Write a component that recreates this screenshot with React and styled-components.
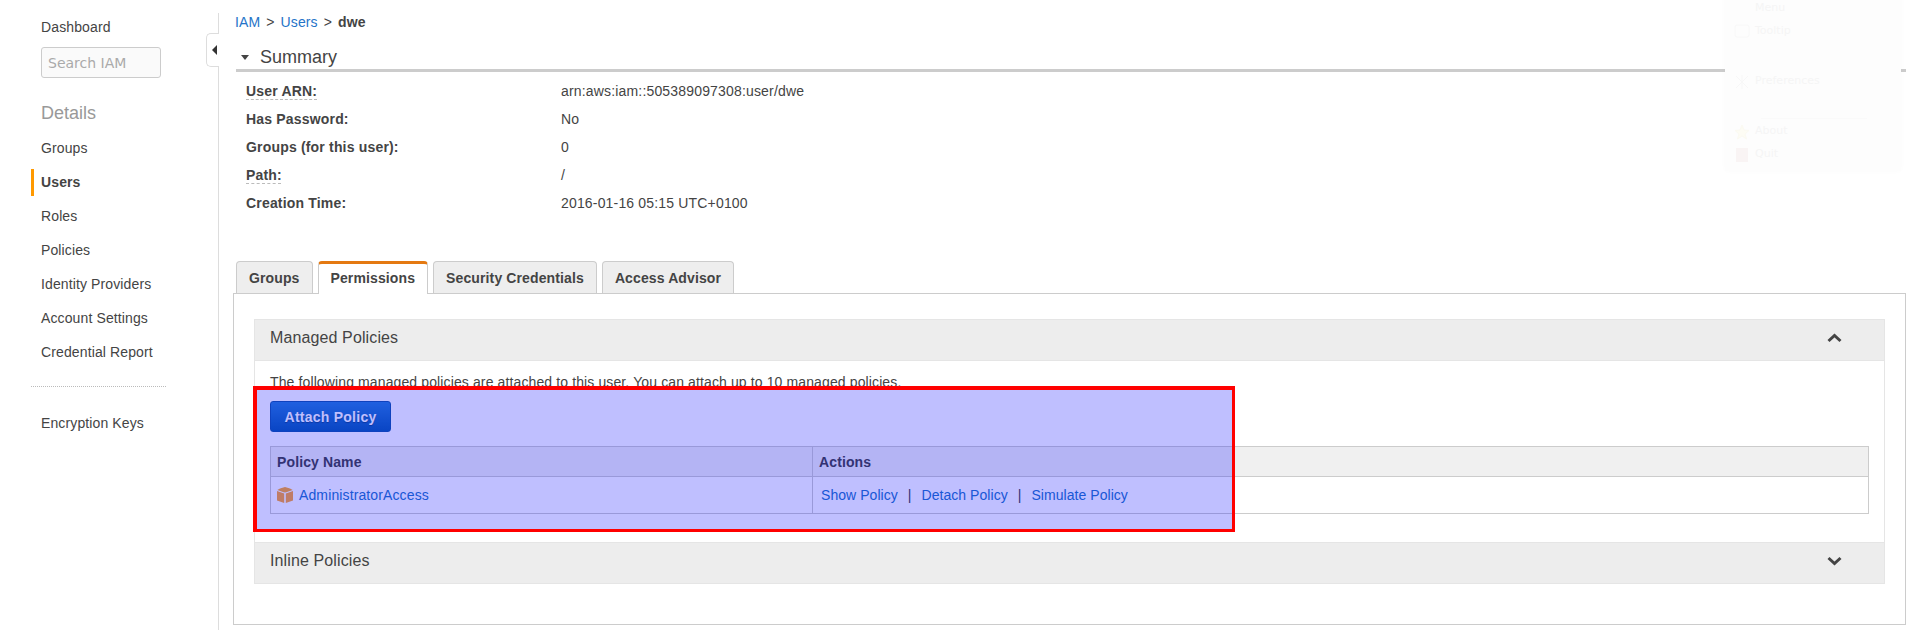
import React from "react";
import styled, { createGlobalStyle } from "styled-components";

const Global = createGlobalStyle`
  * { box-sizing: border-box; }
  html, body { margin: 0; padding: 0; background: #fff; }
  body { font-family: "Liberation Sans", Arial, sans-serif; font-size: 14px; color: #444; letter-spacing: 0.12px; }
`;

const Page = styled.div`
  position: relative;
  display: flex;
  width: 1915px;
  height: 630px;
  overflow: hidden;
  background: #fff;
`;

/* Sidebar */
const Sidebar = styled.aside`
  position: relative;
  width: 219px;
  flex: none;
  margin-top: 13px;
  padding-left: 31px;
  border-right: 1px solid #ddd;
`;
const DashLink = styled.div`
  height: 28px;
  line-height: 28px;
  margin-left: 10px;
`;
const Search = styled.input`
  display: block;
  width: 120px;
  height: 31px;
  margin: 6px 0 0 10px;
  padding: 0 6px;
  border: 1px solid #ccc;
  border-radius: 3px;
  background: #fafafa;
  font: 14px "DejaVu Sans", sans-serif;
  letter-spacing: 0;
  &::placeholder { color: #aaa; opacity: 1; }
`;
const SideTitle = styled.div`
  height: 24px;
  line-height: 24px;
  margin: 23px 0 10px 10px;
  font-size: 18px;
  letter-spacing: 0;
  color: #999;
`;
const NavList = styled.nav`
  display: flex;
  flex-direction: column;
  gap: 7px;
`;
const NavItem = styled.div`
  height: 27px;
  line-height: 27px;
  padding-left: 7px;
  border-left: 3px solid ${(p) => (p.$active ? "#f90" : "transparent")};
  font-weight: ${(p) => (p.$active ? "bold" : "normal")};
`;
const SideDivider = styled.div`
  width: 135px;
  margin: 20px 0 23px;
  border-top: 1px dotted #bbb;
`;
const Handle = styled.div`
  position: absolute;
  top: 20px;
  right: -1px;
  width: 13px;
  height: 34px;
  display: flex;
  align-items: center;
  justify-content: center;
  background: #fff;
  border: 1px solid #ddd;
  border-right: 0;
  border-radius: 5px 0 0 5px;
  &::after {
    content: "";
    border-style: solid;
    border-width: 5px 5px 5px 0;
    border-color: transparent #333 transparent transparent;
    margin-left: 3px;
  }
`;

/* Main */
const Main = styled.main`
  flex: none;
  width: 1687px;
  padding: 13px 0 0 14px;
`;
const Crumbs = styled.div`
  display: flex;
  height: 18px;
  align-items: center;
  padding-left: 2px;
  margin-bottom: 13px;
`;
const Link = styled.a`
  color: #2574c8;
  text-decoration: none;
`;
const CrumbSep = styled.span`
  margin: 0 6px;
`;
const CrumbNow = styled.b`
  color: #444;
`;
const SummaryHead = styled.div`
  display: flex;
  align-items: center;
  height: 28px;
  margin-left: 3px;
  padding: 2px 0 0 5px;
  border-bottom: 3px solid #ccc;
  font-size: 18px;
  letter-spacing: 0;
  color: #444;
  &::before {
    content: "";
    border-style: solid;
    border-width: 5px 4px 0 4px;
    border-color: #444 transparent transparent transparent;
    margin-right: 11px;
  }
`;
const SummaryBody = styled.dl`
  margin: 5px 0 44px;
  padding-left: 13px;
`;
const SummaryRow = styled.div`
  display: grid;
  grid-template-columns: 315px 1fr;
  align-items: center;
  height: 28px;
`;
const Term = styled.dt`
  font-weight: bold;
  letter-spacing: 0.18px;
  ${(p) => p.$dashed && "text-decoration: underline dashed #bbb 1px; text-underline-offset: 3px;"}
`;
const Value = styled.dd`
  margin: 0;
  letter-spacing: 0.17px;
`;

const TabBar = styled.div`
  display: flex;
  gap: 5px;
  height: 32px;
  padding-left: 3px;
`;
const Tab = styled.div`
  position: relative;
  height: ${(p) => (p.$active ? "33px" : "32px")};
  padding: ${(p) => (p.$active ? "0" : "2px")} 12px 0;
  line-height: 28px;
  font-weight: bold;
  background: ${(p) => (p.$active ? "#fff" : "#eee")};
  border: 1px solid #ccc;
  border-top: ${(p) => (p.$active ? "3px solid #e47911" : "1px solid #ccc")};
  border-bottom: 0;
  border-radius: 4px 4px 0 0;
  z-index: 1;
`;
const TabPanel = styled.section`
  width: 1673px;
  height: 332px;
  padding: 25px 20px 0;
  border: 1px solid #ccc;
`;
const AccordionHead = styled.div`
  display: flex;
  align-items: center;
  justify-content: space-between;
  height: 42px;
  padding: 0 42px 5px 15px;
  background: #ededed;
  border: 1px solid #e5e5e5;
  font-size: 16px;
`;
const AccordionBody = styled.div`
  height: 181px;
  padding: 13px 16px 0 15px;
  border: solid #e5e5e5;
  border-width: 0 1px;
`;
const Intro = styled.p`
  margin: 0;
  height: 16px;
  line-height: 16px;
`;
const AttachButton = styled.button`
  display: block;
  width: 121px;
  height: 31px;
  margin: 11px 0 14px;
  padding: 0;
  border: 1px solid #1559a8;
  border-radius: 3px;
  background: linear-gradient(#2b80d5, #0d5cb0);
  color: #fff;
  font: bold 14px "Liberation Sans", sans-serif;
  letter-spacing: 0.25px;
  text-shadow: 0 1px 1px rgba(0, 0, 0, 0.3);
`;
const PolicyTable = styled.table`
  width: 1599px;
  border-collapse: collapse;
  table-layout: fixed;
`;
const HeadCell = styled.th`
  height: 30px;
  padding: 0 6px;
  text-align: left;
  background: #f0f0f0;
  border: 1px solid #ccc;
  width: ${(p) => p.$w || "auto"};
`;
const Cell = styled.td`
  height: 37px;
  padding: 0 ${(p) => (p.$actions ? 8 : 6)}px;
  border: 1px solid #ccc;
  letter-spacing: ${(p) => (p.$actions ? 0.05 : 0.12)}px;
`;
const NameWrap = styled.div`
  display: flex;
  align-items: center;
  gap: 6px;
`;
const ActionSep = styled.span`
  margin: 0 10px;
`;

/* Overlays */
const Highlight = styled.div`
  position: absolute;
  left: 253px;
  top: 386px;
  width: 982px;
  height: 146px;
  border: solid #f00;
  border-width: 4px 3px 3px 4px;
  background: rgba(0, 0, 255, 0.25);
`;
const GhostMenu = styled.div`
  position: absolute;
  top: -10px;
  left: 1725px;
  width: 176px;
  height: 181px;
  background: #fdfdfd;
  box-shadow: 0 0 6px rgba(0, 0, 0, 0.02);
  font: 11px "DejaVu Sans", sans-serif;
  letter-spacing: 0;
  color: #f5f5f5;
`;
const GhostItem = styled.div`
  position: absolute;
  left: 30px;
  top: ${(p) => p.$y}px;
  line-height: 14px;
  white-space: nowrap;
`;
const GhostLine = styled.div`
  position: absolute;
  left: 36px;
  top: 128px;
  width: 106px;
  border-top: 1px solid #fafafa;
`;
const GhostIcon = styled.svg`
  position: absolute;
  left: 9px;
  top: ${(p) => p.$y}px;
`;

const Chevron = ({ up }) => (
  <svg width="15" height="10" viewBox="0 0 15 10" aria-hidden="true">
    <polyline
      points={up ? "1.5,8 7.5,2.5 13.5,8" : "1.5,2 7.5,7.5 13.5,2"}
      fill="none"
      stroke="#444"
      strokeWidth="3"
    />
  </svg>
);

const PolicyIcon = () => (
  <svg width="16" height="16" viewBox="0 0 16 16" aria-hidden="true">
    <path d="M3 1.5 L8 0 L13 1.5 L15.7 3 L8.6 5.4 L8 5.2 L7.4 5.4 L.3 3 Z" fill="#ffa92c" />
    <path d="M0 4 L7.2 6.4 V16 L0 13.6 Z" fill="#ffa634" />
    <path d="M16 4 L8.8 6.4 V16 L16 13.6 Z" fill="#ffa634" />
  </svg>
);

const nav = ["Groups", "Users", "Roles", "Policies", "Identity Providers", "Account Settings", "Credential Report"];
const rows = [
  ["User ARN:", "arn:aws:iam::505389097308:user/dwe", true],
  ["Has Password:", "No"],
  ["Groups (for this user):", "0"],
  ["Path:", "/", true],
  ["Creation Time:", "2016-01-16 05:15 UTC+0100"],
];
const tabs = ["Groups", "Permissions", "Security Credentials", "Access Advisor"];
const ghost = [["Menu", 11], ["Tooltip", 34], ["Preferences", 84], ["About", 134], ["Quit", 157]];

export default function App() {
  return (
    <Page>
      <Global />
      <Sidebar>
        <DashLink>Dashboard</DashLink>
        <Search placeholder="Search IAM" />
        <SideTitle>Details</SideTitle>
        <NavList>
          {nav.map((n) => (
            <NavItem key={n} $active={n === "Users"}>{n}</NavItem>
          ))}
        </NavList>
        <SideDivider />
        <NavItem>Encryption Keys</NavItem>
        <Handle />
      </Sidebar>
      <Main>
        <Crumbs>
          <Link>IAM</Link>
          <CrumbSep>&gt;</CrumbSep>
          <Link>Users</Link>
          <CrumbSep>&gt;</CrumbSep>
          <CrumbNow>dwe</CrumbNow>
        </Crumbs>
        <SummaryHead>Summary</SummaryHead>
        <SummaryBody>
          {rows.map(([k, v, d]) => (
            <SummaryRow key={k}>
              <Term $dashed={d}>{k}</Term>
              <Value>{v}</Value>
            </SummaryRow>
          ))}
        </SummaryBody>
        <TabBar>
          {tabs.map((t) => (
            <Tab key={t} $active={t === "Permissions"}>{t}</Tab>
          ))}
        </TabBar>
        <TabPanel>
          <AccordionHead>
            Managed Policies
            <Chevron up />
          </AccordionHead>
          <AccordionBody>
            <Intro>The following managed policies are attached to this user. You can attach up to 10 managed policies.</Intro>
            <AttachButton>Attach Policy</AttachButton>
            <PolicyTable>
              <thead>
                <tr>
                  <HeadCell $w="542px">Policy Name</HeadCell>
                  <HeadCell>Actions</HeadCell>
                </tr>
              </thead>
              <tbody>
                <tr>
                  <Cell>
                    <NameWrap>
                      <PolicyIcon />
                      <Link>AdministratorAccess</Link>
                    </NameWrap>
                  </Cell>
                  <Cell $actions>
                    <Link>Show Policy</Link>
                    <ActionSep>|</ActionSep>
                    <Link>Detach Policy</Link>
                    <ActionSep>|</ActionSep>
                    <Link>Simulate Policy</Link>
                  </Cell>
                </tr>
              </tbody>
            </PolicyTable>
          </AccordionBody>
          <AccordionHead>
            Inline Policies
            <Chevron />
          </AccordionHead>
        </TabPanel>
      </Main>
      <GhostMenu>
        {ghost.map(([t, y]) => (
          <GhostItem key={t} $y={y}>{t}</GhostItem>
        ))}
        <GhostLine />
        <GhostIcon $y={34} width="16" height="16" viewBox="0 0 16 16" fill="none" stroke="#f8f8f8">
          <rect x="1" y="1" width="14" height="12" rx="2" />
        </GhostIcon>
        <GhostIcon $y={84} width="16" height="16" viewBox="0 0 16 16" fill="none" stroke="#f7f7f7">
          <path d="M2 2 L14 14 M14 2 L2 14 M8 1 V15" />
        </GhostIcon>
        <GhostIcon $y={134} width="16" height="16" viewBox="0 0 16 16" fill="#fdfcf4" stroke="#fbfaf2">
          <path d="M8 1 L10 6 L15 6.5 L11 10 L12.5 15 L8 12 L3.5 15 L5 10 L1 6.5 L6 6 Z" />
        </GhostIcon>
        <GhostIcon $y={157} width="16" height="16" viewBox="0 0 16 16" fill="#f9f4f4">
          <rect x="2" y="1" width="12" height="14" />
        </GhostIcon>
      </GhostMenu>
      <Highlight />
    </Page>
  );
}
